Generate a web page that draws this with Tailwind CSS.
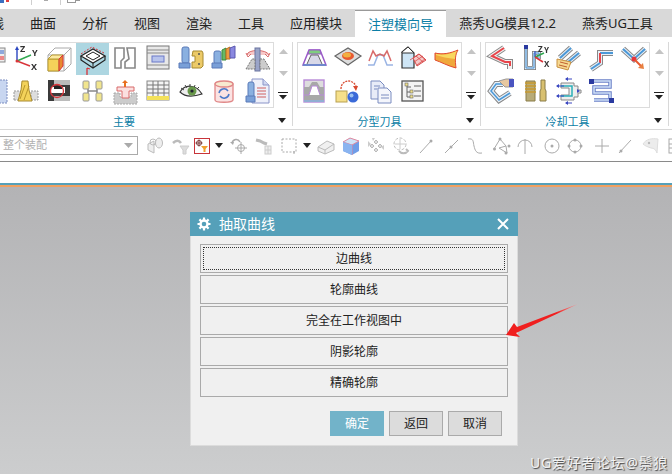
<!DOCTYPE html>
<html lang="zh-CN">
<head>
<meta charset="UTF-8">
<title>抽取曲线</title>
<script src="https://cdn.jsdelivr.net/npm/@tailwindcss/browser@4"></script>
</head>
<body class="bg-white">
<div class="relative w-[672px] h-[474px] overflow-hidden flex flex-col font-['Noto_Sans','Noto_Sans_CJK_SC',sans-serif] text-[#222]">

  <!-- quick access strip -->
  <div class="h-[9px] bg-white flex items-start shrink-0">
    <div class="w-[4px] h-[3px] bg-[#3a6fc0]"></div>
    <div class="w-[3px] h-[2px] ml-[2px] bg-[#e04040]"></div>
    <div class="w-px h-[5px] ml-[22px] bg-[#cfcfcf]"></div>
    <div class="w-[4px] h-px ml-[12px] bg-[#aaa]"></div>
    <div class="w-px h-[5px] ml-[12px] bg-[#cfcfcf]"></div>
    <div class="w-[9px] h-[3px] ml-[6px] border-b border-x border-[#999]"></div>
    <div class="w-[4px] h-[1px] bg-[#999]"></div>
  </div>

  <!-- tabs -->
  <div class="h-[28px] bg-[#d9d9d9] flex items-stretch text-[13px] leading-[28px] whitespace-nowrap shrink-0 -ml-[35px]">
    <div class="px-[13px]">曲线</div>
    <div class="px-[13px]">曲面</div>
    <div class="px-[13px]">分析</div>
    <div class="px-[13px]">视图</div>
    <div class="px-[13px]">渲染</div>
    <div class="px-[13px]">工具</div>
    <div class="px-[13px]">应用模块</div>
    <div class="px-[13px] mt-px bg-white border-t border-[#999] text-[#0b7ea6] leading-[26px]">注塑模向导</div>
    <div class="px-[13px]">燕秀UG模具12.2</div>
    <div class="px-[13px]">燕秀UG工具</div>
  </div>

  <!-- ribbon -->
  <div class="h-[93px] bg-white border-b border-[#d8d8d8] flex items-start pt-[5px] shrink-0 -ml-[26px]">

    <!-- group: 主要 -->
    <div class="grid grid-cols-[300px_18px]">
      <div class="w-[300px] h-[66px] border border-[#dcdcdc] pl-[2px] grid grid-cols-[repeat(9,33px)] grid-rows-[32px_32px] overflow-hidden [&>svg]:blur-[0.4px]">
        <svg class="w-[33px] h-[32px]" viewBox="0 0 33 32"><rect x="18" y="5" width="10" height="14" fill="#eee" stroke="#888"/><rect x="19" y="7" width="8" height="4" fill="#8fa8dc"/><rect x="19" y="13" width="8" height="4" fill="#e88"/></svg>
        <svg class="w-[33px] h-[32px]" viewBox="0 0 33 32"><path d="M7 18V5" stroke="#2a46c0" stroke-width="1.4"/><path d="M5 7l2-4 2 4z" fill="#2a46c0"/><path d="M7 18l14-6" stroke="#2fa84f" stroke-width="1.4"/><path d="M7 18l13 5" stroke="#d8343a" stroke-width="1.4"/><circle cx="7" cy="18" r="1.5" fill="#d8343a"/><text x="10" y="9" font-size="9" font-weight="700" fill="#333">Z</text><text x="22" y="13" font-size="9" font-weight="700" fill="#333">Y</text><text x="21" y="27" font-size="9" font-weight="700" fill="#333">X</text></svg>
        <svg class="w-[33px] h-[32px]" viewBox="0 0 33 32"><path d="M5 12l7-7h16v16l-7 7H5z" fill="#fff" stroke="#aaa"/><path d="M5 12h16v16M21 12l7-7" fill="none" stroke="#aaa"/><path d="M5 16h11v12H5z" fill="#f5d25a" stroke="#b79a30"/><path d="M5 16l4-4h11l-4 4z" fill="#fbe9a0" stroke="#b79a30"/><path d="M16 16l4-4v11l-4 5z" fill="#e88a30" stroke="#d8343a"/></svg>
        <svg class="w-[33px] h-[32px] bg-[#add6e1]" viewBox="0 0 33 32"><path d="M5 13L17 6l12 7-12 7z" fill="#fff" stroke="#222" stroke-width="1.2"/><path d="M10 13l7-4 7 4-7 4z" fill="#fff" stroke="#222"/><path d="M5 13v4l12 8 12-8v-4" fill="none" stroke="#222" stroke-width="1.2"/><path d="M17 20v5" stroke="#222"/><path d="M5 11L16 4l12 6" fill="none" stroke="#d8343a" stroke-dasharray="2 1.5"/><path d="M11 25v7M11 25l3 1" stroke="#d8343a" stroke-width="1.3" fill="none"/></svg>
        <svg class="w-[33px] h-[32px]" viewBox="0 0 33 32"><path d="M6 5h9v10l-3 3v7H6z" fill="#fff" stroke="#888" stroke-width="1.6"/><path d="M18 5h8v20h-10v-6l4-3z" fill="#fff" stroke="#888" stroke-width="1.6"/></svg>
        <svg class="w-[33px] h-[32px]" viewBox="0 0 33 32"><rect x="5" y="3" width="22" height="23" fill="#e8e8e8" stroke="#777"/><path d="M5 7h22M5 10h22M5 22h22" stroke="#888"/><rect x="10" y="13" width="12" height="6" fill="#b8c4ec" stroke="#6a78c8"/></svg>
        <svg class="w-[33px] h-[32px]" viewBox="0 0 33 32"><rect x="7" y="4" width="7" height="16" rx="2" fill="#8ab0e0" stroke="#5a7ab8"/><path d="M4 20h11v5H4z" fill="#7aa0d8" stroke="#5a7ab8"/><path d="M18 8h9l1 2v13l-2 2h-9v-6h3v-6h-3z" fill="#ecca68" stroke="#a88a30"/><circle cx="24" cy="11" r="1" fill="#555"/><circle cx="24" cy="21" r="1" fill="#555"/></svg>
        <svg class="w-[33px] h-[32px]" viewBox="0 0 33 32"><rect x="6" y="8" width="7" height="13" rx="2" fill="#8ab0e0" stroke="#5a7ab8"/><path d="M4 20h10v5H4z" fill="#7aa0d8" stroke="#5a7ab8"/><path d="M14 7l4-2v12h-4z" fill="#66b866" stroke="#3a8a3a"/><path d="M18 6l4-2v12h-4z" fill="#ee9a40" stroke="#b87020"/><path d="M22 5l5-2v12h-5z" fill="#8a88e0" stroke="#5a58b0"/></svg>
        <svg class="w-[33px] h-[32px]" viewBox="0 0 33 32"><path d="M6 12c0-6 20-6 22 0" fill="#f7c8c8" stroke="#d86a6a"/><path d="M5 10l2 4 3-3M29 10l-2 4-3-3" fill="none" stroke="#d86a6a"/><rect x="14" y="5" width="5" height="23" fill="#9aa4c8" stroke="#6a74a0"/><path d="M5 26l6-10h3v10zM19 16h4l6 10H19z" fill="#ccc" stroke="#777" stroke-dasharray="2 1"/></svg>

        <svg class="w-[33px] h-[32px]" viewBox="0 0 33 32"><rect x="20" y="5" width="10" height="23" fill="#c8d6f0" stroke="#7a8cc0" stroke-dasharray="2 1"/></svg>
        <svg class="w-[33px] h-[32px]" viewBox="0 0 33 32"><path d="M4 25v-9h7v9zM21 25v-9h7v9z" fill="#ddd" stroke="#999" stroke-dasharray="2 1"/><path d="M8 26l3-11 1-9h6l1 9 3 11z" fill="#f3d25a" stroke="#a88a30"/><path d="M10 24l5-14M14 25l5-14" stroke="#b8962c"/></svg>
        <svg class="w-[33px] h-[32px]" viewBox="0 0 33 32"><rect x="5" y="5" width="22" height="21" fill="#3a3a3a"/><path d="M11 5h16v5H11zM11 21h16v5H11z" fill="#bbb"/><path d="M8 12h14v6H8z" fill="#fff"/><path d="M11 11h8v3h-8z" fill="#222"/><circle cx="14" cy="16" r="6.5" fill="none" stroke="#d8343a" stroke-width="1.3"/></svg>
        <svg class="w-[33px] h-[32px]" viewBox="0 0 33 32"><path d="M12 10v12M21 10v12M12 16h9" stroke="#888" stroke-width="1.5"/><rect x="7" y="6" width="6" height="8" rx="1" fill="#f1e58e" stroke="#999"/><rect x="20" y="6" width="6" height="8" rx="1" fill="#f1e58e" stroke="#999"/><rect x="7" y="18" width="6" height="8" rx="1" fill="#f1e58e" stroke="#999"/><rect x="20" y="18" width="6" height="8" rx="1" fill="#f1e58e" stroke="#999"/></svg>
        <svg class="w-[33px] h-[32px]" viewBox="0 0 33 32"><path d="M5 18h6v4h11v-4h6v11H5z" fill="#ccc" stroke="#aaa" stroke-dasharray="2 1"/><path d="M8 12h17v4h-5v7h-7v-7H8z" fill="#fbe0e0" stroke="#d86a6a"/><path d="M16 12V7" stroke="#e87020" stroke-width="2"/><path d="M13 8l3-3 3 3z" fill="#e87020"/></svg>
        <svg class="w-[33px] h-[32px]" viewBox="0 0 33 32"><rect x="5" y="6" width="22" height="19" fill="#f4f4f4" stroke="#888"/><path d="M5 10h22M5 14h22M5 18h22M11 6v19M16 6v19M22 6v19" stroke="#777"/><rect x="5" y="21" width="22" height="4" fill="#f3e15a"/></svg>
        <svg class="w-[33px] h-[32px]" viewBox="0 0 33 32"><path d="M5 17c5-8 16-8 22 2-6 2-16 4-22-2z" fill="#eee" stroke="#333" stroke-width="1.2"/><path d="M6 13l3 2M10 10l2 3M15 9v3M20 10l-1 3M24 12l-2 2" stroke="#444"/><circle cx="17" cy="16" r="4.5" fill="#68984a"/><circle cx="17" cy="16" r="1.6" fill="#223"/></svg>
        <svg class="w-[33px] h-[32px]" viewBox="0 0 33 32"><path d="M7 9v16c0 3 18 3 18 0V9z" fill="#fbe3e3" stroke="#e08888" stroke-width="1.3"/><ellipse cx="16" cy="9" rx="9" ry="3" fill="#f7ead0" stroke="#e08888" stroke-width="1.3"/><path d="M11 18a5 5 0 0 1 9-2M21 19a5 5 0 0 1-9 2" fill="none" stroke="#4a78c8" stroke-width="1.5"/></svg>
        <svg class="w-[33px] h-[32px]" viewBox="0 0 33 32"><path d="M11 4h11l6 6v18H11z" fill="#eef0fa" stroke="#8a94c8"/><path d="M22 4v6h6" fill="#cfd6f0" stroke="#8a94c8"/><path d="M16 13h9M16 16h9M16 19h9M16 22h9" stroke="#d06060"/><rect x="7" y="7" width="6" height="15" rx="2" fill="#8ab0e0" stroke="#5a7ab8"/><path d="M5 21h9v6H5z" fill="#7aa0d8" stroke="#5a7ab8"/></svg>
      </div>
      <div class="flex flex-col items-center pt-[6px] w-[18px]">
        <svg class="w-[9px] h-[5px] mt-px" viewBox="0 0 9 5"><path d="M0 5l4.500-5 4.500 5z" fill="#c4c4c4"/></svg>
        <svg class="w-[9px] h-[5px] mt-[17px]" viewBox="0 0 9 5"><path d="M0 0l4.500 5 4.500-5z" fill="#c4c4c4"/></svg>
        <svg class="w-[10px] h-[8px] mt-[16px]" viewBox="0 0 10 8"><path d="M0 .5h10" stroke="#222"/><path d="M1 3h8L5 7.500z" fill="#222"/></svg>
      </div>
      <div class="text-center text-[11px] leading-[28px] text-[#0b7ea6]">主要</div>
      <div class="flex justify-center pt-[10px] pr-[3px]"><svg class="w-[8px] h-[5px]" viewBox="0 0 8 5"><path d="M0 0h8L4 5z" fill="#222"/></svg></div>
    </div>
    <div class="w-px h-[84px] bg-[#d8d8d8] mr-[4px]"></div>

    <!-- group: 分型刀具 -->
    <div class="grid grid-cols-[165px_18px]">
      <div class="w-[165px] h-[66px] border border-[#dcdcdc] grid grid-cols-[repeat(5,33px)] grid-rows-[32px_32px] overflow-hidden [&>svg]:blur-[0.4px]">
        <svg class="w-[33px] h-[32px]" viewBox="0 0 33 32"><path d="M11 7h11l6 15H5z" fill="#fff" stroke="#9a5ac8" stroke-width="1.5"/><path d="M11 7h11l1 4H10z" fill="#7fce7f" stroke="#9a5ac8"/><path d="M9 21l4-9h7l4 9" fill="#d8d8e8" stroke="#666"/><path d="M5 22h23" stroke="#5a8ac8" stroke-width="1.5"/></svg>
        <svg class="w-[33px] h-[32px]" viewBox="0 0 33 32"><path d="M4 13L17 5l13 8-13 9z" fill="#ddd" stroke="#666" stroke-width="1.2"/><ellipse cx="17" cy="13" rx="6" ry="4" fill="#e85a30"/><ellipse cx="16" cy="12" rx="4" ry="2.500" fill="#f2b040"/></svg>
        <svg class="w-[33px] h-[32px]" viewBox="0 0 33 32"><path d="M4 22h6l4-10h5l4 10h6" fill="none" stroke="#9ab4e4" stroke-width="1.5"/><path d="M5 18l4-10 3 5 4-2 4 2 3-5 4 10" fill="none" stroke="#d86a6a" stroke-width="1.5"/></svg>
        <svg class="w-[33px] h-[32px]" viewBox="0 0 33 32"><path d="M5 9l6-5 6 6v15H5z" fill="#cfe6f6" stroke="#333" stroke-width="1.2"/><path d="M5 9l6-5 6 6H5z" fill="#fff" stroke="#333"/><path d="M16 15l6-4 7 6-9 6z" fill="#f4c8c8" stroke="#d84a4a"/><path d="M19 13l7 6M22 11l7 6M13 17l9-6M17 19l9-6M20 22l8-6" stroke="#d84a4a" stroke-width=".8"/></svg>
        <svg class="w-[33px] h-[32px]" viewBox="0 0 33 32"><path d="M5 10c8 2 16 0 23-3-3 5-3 10-2 18-8-2-15-6-21-8z" fill="#f0a83c" stroke="#e04a30"/><path d="M6 11c7 2 14 0 21-3-2 3-2 5-2 8-7-1-14-2-19-4z" fill="#f8d860"/></svg>
        <svg class="w-[33px] h-[32px]" viewBox="0 0 33 32"><rect x="6" y="5" width="20" height="22" fill="#ddd" stroke="#b88ad8" stroke-width="1.4"/><path d="M6 12h5l3-5h5l3 5h4v15H6z" fill="#a8a8a8"/><path d="M6 20h5l3-9h5l3 9h4" fill="#fff" stroke="#b88ad8"/><path d="M6 26h20" stroke="#8ab0e0" stroke-width="1.5"/></svg>
        <svg class="w-[33px] h-[32px]" viewBox="0 0 33 32"><rect x="5" y="16" width="11" height="11" fill="#f6e08a" stroke="#b8a050"/><path d="M10 14c0-9 11-11 15-3" fill="none" stroke="#d84a30" stroke-width="1.3" stroke-dasharray="2 1"/><path d="M22 11l5 0-2 5z" fill="#d84a30"/><circle cx="22" cy="22" r="5.500" fill="#3a6ad8"/><circle cx="20.500" cy="20.500" r="2" fill="#9ac0f0"/></svg>
        <svg class="w-[33px] h-[32px]" viewBox="0 0 33 32"><path d="M7 6h9l4 4v14H7z" fill="#e8ecf8" stroke="#7a8cc0"/><path d="M14 13h9l4 4v11H14z" fill="#f4f6fc" stroke="#7a8cc0"/><path d="M17 20h8M17 23h8M10 11h6M10 14h3" stroke="#7a8cc0"/></svg>
        <svg class="w-[33px] h-[32px]" viewBox="0 0 33 32"><rect x="5" y="6" width="21" height="20" fill="#f4f4f4" stroke="#555" stroke-width="1.3"/><path d="M10 9v13M10 12h4M10 17h4M10 22h4M17 11h7M17 16h7M17 21h7" stroke="#666"/><rect x="8" y="8" width="3" height="3" fill="#f0e08a" stroke="#666" stroke-width=".6"/><rect x="13" y="15" width="3" height="3" fill="#f0e08a" stroke="#666" stroke-width=".6"/><rect x="13" y="20" width="3" height="3" fill="#f0e08a" stroke="#666" stroke-width=".6"/></svg>
        <span></span>
      </div>
      <div class="flex flex-col items-center pt-[6px] w-[18px]">
        <svg class="w-[9px] h-[5px] mt-px" viewBox="0 0 9 5"><path d="M0 5l4.500-5 4.500 5z" fill="#c4c4c4"/></svg>
        <svg class="w-[9px] h-[5px] mt-[17px]" viewBox="0 0 9 5"><path d="M0 0l4.500 5 4.500-5z" fill="#c4c4c4"/></svg>
        <svg class="w-[10px] h-[8px] mt-[16px]" viewBox="0 0 10 8"><path d="M0 .5h10" stroke="#222"/><path d="M1 3h8L5 7.500z" fill="#222"/></svg>
      </div>
      <div class="text-center text-[11px] leading-[28px] text-[#0b7ea6]">分型刀具</div>
      <div class="flex justify-center pt-[10px] pr-[3px]"><svg class="w-[8px] h-[5px]" viewBox="0 0 8 5"><path d="M0 0h8L4 5z" fill="#222"/></svg></div>
    </div>
    <div class="w-px h-[84px] bg-[#d8d8d8] mr-[4px]"></div>

    <!-- group: 冷却工具 -->
    <div class="grid grid-cols-[165px_18px]">
      <div class="w-[165px] h-[66px] border border-[#dcdcdc] grid grid-cols-[repeat(5,33px)] grid-rows-[32px_32px] overflow-hidden [&>svg]:blur-[0.4px]">
        <svg class="w-[33px] h-[32px]" viewBox="0 0 33 32"><g fill="none"><path d="M18 5L6 13l13 6h5v7" stroke="#888" stroke-width="6"/><path d="M18 5L6 13l13 6h5v7" stroke="#f2f2f2" stroke-width="4"/><path d="M18 5L6 13l13 6h5v4" stroke="#e8444a" stroke-width="2"/></g></svg>
        <svg class="w-[33px] h-[32px]" viewBox="0 0 33 32"><g fill="none"><path d="M7 5v20h8V10h5v6" stroke="#777" stroke-width="4"/><path d="M7 5v20h8V10h5v6" stroke="#d8e8f6" stroke-width="2.500"/><path d="M7 5v20h8V10h5v6" stroke="#4a90d0"/></g><rect x="5" y="2" width="4" height="4" fill="#2a3aa0"/><path d="M16 14V8" stroke="#2a46c0"/><path d="M16 14l9-4" stroke="#2fa84f" stroke-width="1.5"/><path d="M16 14l8 5" stroke="#d8343a" stroke-width="1.5"/><text x="19" y="9" font-size="8" font-weight="700" fill="#333">Z</text><text x="25" y="10" font-size="8" font-weight="700" fill="#333">Y</text><text x="25" y="24" font-size="8" font-weight="700" fill="#333">X</text></svg>
        <svg class="w-[33px] h-[32px]" viewBox="0 0 33 32"><g fill="none"><path d="M8 15L19 5M15 20l12-10" stroke="#888" stroke-width="6"/><path d="M8 15L19 5M15 20l12-10" stroke="#e8f0f8" stroke-width="4"/><path d="M8 15L19 5M15 20l12-10" stroke="#4a98d8" stroke-width="2"/></g><path d="M5 16l14 3-3 8-11-3z" fill="#f6d890" stroke="#c89040"/><path d="M8 19l8 2M7 22l8 2" stroke="#c06030"/></svg>
        <svg class="w-[33px] h-[32px]" viewBox="0 0 33 32"><g fill="none"><path d="M28 10H15v10L6 26" stroke="#888" stroke-width="6"/><path d="M28 10H15v10L6 26" stroke="#e8f0f8" stroke-width="4"/><path d="M28 10H15" stroke="#4a98d8" stroke-width="2"/><path d="M15 10v10" stroke="#e8444a" stroke-width="2"/><path d="M15 20L6 26" stroke="#4a98d8" stroke-width="2"/></g></svg>
        <svg class="w-[33px] h-[32px]" viewBox="0 0 33 32"><g fill="none"><path d="M5 6l11 10L27 6" stroke="#888" stroke-width="6"/><path d="M5 6l11 10L27 6" stroke="#e8f0f8" stroke-width="4"/><path d="M5 6l11 10L27 6" stroke="#4a98d8" stroke-width="2"/></g><circle cx="16" cy="16" r="2.500" fill="#e8343a"/><path d="M17 17l7 7" stroke="#e85a30" stroke-width="2"/><path d="M26 26l-1-6-5 5z" fill="#e88040"/></svg>
        <svg class="w-[33px] h-[32px]" viewBox="0 0 33 32"><g fill="none"><path d="M17 9H10L5 16l8 9 11-7" stroke="#888" stroke-width="6"/><path d="M17 9H10L5 16l8 9 11-7" stroke="#e8f0f8" stroke-width="4"/><path d="M17 9H10L5 16l8 9 11-7" stroke="#4a98d8" stroke-width="1.500"/></g><path d="M13 6l7-2h7v8h-8z" fill="#e8c8a0" stroke="#999"/><rect x="23" y="4" width="5" height="8" fill="#4a54c0"/></svg>
        <svg class="w-[33px] h-[32px]" viewBox="0 0 33 32"><path d="M7 6h9v20H7z" fill="#b8ab78" stroke="#8a7c48"/><path d="M6 8h11M6 11h11M6 14h11M6 17h11" stroke="#c89a30" stroke-width="1.5"/><path d="M22 5h4v9l1 2v10h-6V16l1-2z" fill="#d8c070" stroke="#8a7c48"/></svg>
        <svg class="w-[33px] h-[32px]" viewBox="0 0 33 32"><path d="M9 8h13v3h4v4h3v3h-3v4h-4v3H9v-5h8v-7H9z" fill="#eee" stroke="#888"/><path d="M9 11h11v10H9" fill="none" stroke="#2cb0b8" stroke-width="1.500"/><path d="M5 11h7M5 21h7M14 4h6M14 28h6" stroke="#3a46c0"/><path d="M4 11l3-2v4zM4 21l3-2v4zM13 4l3-2v4zM13 28l3-2v4zM28 16l-3-2v4z" fill="#3a46c0"/></svg>
        <svg class="w-[33px] h-[32px]" viewBox="0 0 33 32"><g fill="none"><path d="M6 6h19v6H9v6h16v7h-16" stroke="#6a80c8" stroke-width="3.500"/><path d="M6 6h19v6H9v6h16v7h-16" stroke="#cfe0f6" stroke-width="1.500"/></g><rect x="4" y="4" width="5" height="5" fill="#2a3aa0"/><rect x="24" y="23" width="5" height="5" fill="#2a3aa0"/></svg>
        <span></span>
      </div>
      <div class="flex flex-col items-center pt-[6px] w-[18px]">
        <svg class="w-[9px] h-[5px] mt-px" viewBox="0 0 9 5"><path d="M0 5l4.500-5 4.500 5z" fill="#c4c4c4"/></svg>
        <svg class="w-[9px] h-[5px] mt-[17px]" viewBox="0 0 9 5"><path d="M0 0l4.500 5 4.500-5z" fill="#c4c4c4"/></svg>
        <svg class="w-[10px] h-[8px] mt-[16px]" viewBox="0 0 10 8"><path d="M0 .5h10" stroke="#222"/><path d="M1 3h8L5 7.500z" fill="#222"/></svg>
      </div>
      <div class="text-center text-[11px] leading-[28px] text-[#0b7ea6]">冷却工具</div>
      <div class="flex justify-center pt-[10px] pr-[3px]"><svg class="w-[8px] h-[5px]" viewBox="0 0 8 5"><path d="M0 0h8L4 5z" fill="#222"/></svg></div>
    </div>
    <div class="w-px h-[84px] bg-[#d8d8d8]"></div>
  </div>

  <!-- selection bar -->
  <div class="h-[32px] bg-white border-b border-[#8a8a8a] flex items-center shrink-0 [&>svg]:blur-[0.3px]">
    <div class="w-[139px] h-[19px] -ml-px pl-[3px] pr-[4px] border border-[#aaa] flex items-center justify-between shrink-0 text-[11px] text-[#b0b0b0]">
      <span>整个装配</span>
      <svg class="w-[9px] h-[5px]" viewBox="0 0 9 5"><path d="M0 0h9L4.500 5z" fill="#aaa"/></svg>
    </div>
    <svg class="w-[20px] h-[20px] ml-[7px] shrink-0" viewBox="0 0 20 20"><path d="M3 8l6-3v12l-6-3zM9 8h5" fill="#eee" stroke="#bbb"/><circle cx="8" cy="6" r="3" fill="none" stroke="#bbb"/><ellipse cx="14" cy="7" rx="3.500" ry="5" fill="#eee" stroke="#bbb"/></svg>
    <svg class="w-[20px] h-[20px] ml-[6px] shrink-0" viewBox="0 0 20 20"><path d="M2 7c3-3 6-3 8 0" fill="none" stroke="#bbb" stroke-width="2.500"/><path d="M9 10h9l-3 4v4h-3v-4z" fill="#ddd" stroke="#ccc"/></svg>
    <svg class="w-[20px] h-[20px] ml-[1px] shrink-0" viewBox="0 0 20 20"><rect x="2.500" y="2.500" width="15" height="15" fill="#fff" stroke="#c8343a"/><circle cx="7" cy="7" r="2.500" fill="none" stroke="#7a3a3a"/><path d="M7 3.500v7M3.500 7h7" stroke="#7a3a3a"/><path d="M9 10h7l-2.500 3v3h-2v-3z" fill="#f0a030"/></svg>
    <svg class="w-[8px] h-[5px] ml-[3px] shrink-0" viewBox="0 0 8 5"><path d="M0 0h8L4 5z" fill="#222"/></svg>
    <svg class="w-[20px] h-[20px] ml-[6px] shrink-0" viewBox="0 0 20 20"><circle cx="12" cy="12" r="3.500" fill="none" stroke="#aaa"/><path d="M12 6v12M6 12h12" stroke="#aaa"/><path d="M3 7c1-4 6-5 8-1" fill="none" stroke="#aaa" stroke-width="1.500"/><path d="M1 6l4 0-1 3z" fill="#aaa"/></svg>
    <svg class="w-[20px] h-[20px] ml-[4px] shrink-0" viewBox="0 0 20 20"><path d="M3 4l4 1 4 2 3 1" stroke="#bbb" stroke-width="3" fill="none"/><rect x="12" y="10" width="6" height="8" fill="#eee" stroke="#ccc"/><path d="M12 14h6M15 10v8" stroke="#ccc"/></svg>
    <svg class="w-[20px] h-[20px] ml-[6px] shrink-0" viewBox="0 0 20 20"><rect x="3" y="3" width="14" height="13" fill="none" stroke="#aaa" stroke-dasharray="2 1.500"/><path d="M15 15v3" stroke="#aaa"/></svg>
    <svg class="w-[8px] h-[5px] ml-[4px] shrink-0" viewBox="0 0 8 5"><path d="M0 0h8L4 5z" fill="#222"/></svg>
    <svg class="w-[20px] h-[20px] ml-[5px] shrink-0" viewBox="0 0 20 20"><path d="M2 11l9-6 7 3v6l-9 4-7-3z" fill="#f0f0f0" stroke="#bbb"/><path d="M2 11l7 3 9-6M9 14v4" fill="none" stroke="#bbb"/></svg>
    <svg class="w-[20px] h-[20px] ml-[5px] shrink-0" viewBox="0 0 20 20"><path d="M2 6l7-4 9 3v10l-7 4-9-4z" fill="#6f9de8"/><path d="M2 6l9 3 7-4-9-3z" fill="#cfe4f8" stroke="#e08aa0"/><path d="M11 9v10" stroke="#e08aa0"/><path d="M2 6v9l9 4V9z" fill="#8ab4f0"/></svg>
    <svg class="w-[20px] h-[20px] ml-[5px] shrink-0" viewBox="0 0 20 20"><path d="M10 4l2 2-2 2-2-2zM10 12l2 2-2 2-2-2zM6 8l2 2-2 2-2-2zM14 8l2 2-2 2-2-2z" fill="#ddd" stroke="#bbb"/><path d="M2 5l3 3-3 3zM18 9l-3 2 3 3zM6 2h3l-2 3z" fill="#ccc"/></svg>
    <svg class="w-[20px] h-[20px] ml-[5px] shrink-0" viewBox="0 0 20 20"><circle cx="9" cy="8" r="6" fill="none" stroke="#bbb" stroke-dasharray="3 1.500"/><path d="M9 3v10M4 8h10" stroke="#ccc"/><path d="M8 15c2 3 7 3 9 0l-2-2" fill="none" stroke="#bbb" stroke-width="2"/></svg>
    <svg class="w-[20px] h-[20px] ml-[5px] shrink-0" viewBox="0 0 20 20"><path d="M4 17L15 5" stroke="#aaa"/><circle cx="15" cy="5" r="1.500" fill="#aaa"/></svg>
    <svg class="w-[20px] h-[20px] ml-[5px] shrink-0" viewBox="0 0 20 20"><path d="M4 17L17 4" stroke="#aaa"/><circle cx="10" cy="11" r="1.500" fill="#aaa"/></svg>
    <svg class="w-[20px] h-[20px] ml-[4px] shrink-0" viewBox="0 0 20 20"><path d="M3 3c6-1 5 3 6 7s2 8 8 7" fill="none" stroke="#aaa"/></svg>
    <svg class="w-[20px] h-[20px] ml-[7px] shrink-0" viewBox="0 0 20 20"><path d="M2 13l6-10 6 7 1 7-8-5 7-2" fill="none" stroke="#aaa"/><circle cx="2.500" cy="13" r="1.500" fill="#aaa"/><circle cx="8" cy="3" r="1.500" fill="#aaa"/><circle cx="14" cy="17" r="1.500" fill="#aaa"/><circle cx="17" cy="10" r="1.500" fill="#aaa"/></svg>
    <svg class="w-[20px] h-[20px] ml-[3px] shrink-0" viewBox="0 0 20 20"><path d="M3 11a7 7 0 0 1 14 0M10 3v15" fill="none" stroke="#aaa"/></svg>
    <svg class="w-[20px] h-[20px] ml-[7px] shrink-0" viewBox="0 0 20 20"><circle cx="10" cy="10" r="7" fill="none" stroke="#aaa"/><circle cx="10" cy="10" r="1.500" fill="#aaa"/></svg>
    <svg class="w-[20px] h-[20px] ml-[3px] shrink-0" viewBox="0 0 20 20"><circle cx="10" cy="10" r="6" fill="none" stroke="#aaa"/><circle cx="10" cy="4" r="1.500" fill="#aaa"/><circle cx="10" cy="16" r="1.500" fill="#aaa"/><circle cx="4" cy="10" r="1.500" fill="#aaa"/><circle cx="16" cy="10" r="1.500" fill="#aaa"/></svg>
    <svg class="w-[20px] h-[20px] ml-[7px] shrink-0" viewBox="0 0 20 20"><path d="M10 3v14M3 10h14" stroke="#aaa"/></svg>
    <svg class="w-[20px] h-[20px] ml-[3px] shrink-0" viewBox="0 0 20 20"><path d="M4 17L16 4" stroke="#aaa"/><circle cx="6" cy="15" r="1.500" fill="#aaa"/></svg>
    <svg class="w-[20px] h-[20px] ml-[6px] shrink-0" viewBox="0 0 20 20"><path d="M2 8c3-5 9-6 15-5l-1 14c-1-3-3-5-6-5-3-1-6-2-8-4z" fill="#ececec" stroke="#ddd"/><circle cx="8" cy="7" r="1.200" fill="#bbb"/></svg>
    <svg class="w-[20px] h-[20px] ml-[6px] shrink-0" viewBox="0 0 20 20"><rect x="2" y="3" width="14" height="14" fill="#fff" stroke="#aaa"/><path d="M2 8h14M2 12h14" stroke="#aaa"/></svg>
  </div>

  <!-- blank band and accent lines -->
  <div class="h-[21px] bg-white shrink-0"></div>
  <div class="h-[2px] bg-[#55a0b9] shrink-0"></div>
  <div class="h-[2px] bg-[#f0a060] shrink-0"></div>

  <!-- graphics window -->
  <div class="flex-1 bg-gradient-to-b from-[#b3b3b5] to-[#cccdce]"></div>

  <!-- dialog -->
  <div class="absolute left-[190px] top-[212px] w-[328px] h-[234px] bg-[#f0f0f0] border-x border-b border-[#dcdcdc] flex flex-col">
    <div class="h-[24px] -mx-px bg-[#55a0b9] flex items-center pl-[7px] pr-[9px] text-white text-[14px] shrink-0">
      <svg class="w-[14px] h-[14px] shrink-0" viewBox="0 0 14 14"><path d="M7 3.500a3.500 3.500 0 1 0 0 7 3.500 3.500 0 0 0 0-7z" fill="none" stroke="#fff" stroke-width="2.400"/><path d="M7 .5v3M7 10.500v3M.5 7h3M10.500 7h3M2.400 2.400l2.100 2.100M9.500 9.500l2.100 2.100M11.600 2.400L9.500 4.500M4.500 9.500l-2.100 2.100" stroke="#fff" stroke-width="2.200"/></svg>
      <span class="ml-[8px] leading-[24px]">抽取曲线</span>
      <svg class="w-[12px] h-[12px] ml-auto shrink-0" viewBox="0 0 12 12"><path d="M1 1l10 10M11 1L1 11" stroke="#fff" stroke-width="2"/></svg>
    </div>
    <div class="flex flex-col gap-[2px] px-[9px] pt-[8px] text-[12px]">
      <button class="h-[29px] border border-[#aaa] p-[2px] flex"><span class="flex-1 border border-dotted border-[#333] leading-[21px]">边曲线</span></button>
      <button class="h-[29px] border border-[#aaa]">轮廓曲线</button>
      <button class="h-[29px] border border-[#aaa]">完全在工作视图中</button>
      <button class="h-[29px] border border-[#aaa]">阴影轮廓</button>
      <button class="h-[29px] border border-[#aaa]">精确轮廓</button>
    </div>
    <div class="flex justify-end gap-[5px] pt-[14px] pr-[15px] text-[12px]">
      <button class="w-[54px] h-[25px] bg-[#72b3c9] text-white">确定</button>
      <button class="w-[54px] h-[25px] bg-[#dcdcdc] border border-[#aaa]">返回</button>
      <button class="w-[54px] h-[25px] bg-[#dcdcdc] border border-[#aaa]">取消</button>
    </div>
  </div>

  <!-- annotation arrow -->
  <svg class="absolute left-[500px] top-[300px] w-[84px] h-[42px]" viewBox="0 0 84 42">
    <defs><linearGradient id="arrowFade" x1="0" x2="1" y1="0" y2="0"><stop offset="0.7" stop-color="#f01f1f"/><stop offset="1" stop-color="#f59a9a"/></linearGradient></defs>
    <path d="M78 4L17 27l-3-4-8 12 14 2-4-4z" fill="url(#arrowFade)"/>
  </svg>

  <!-- watermark -->
  <div class="absolute right-[4px] bottom-[2px] text-[14px] leading-[18px] tracking-[0.7px] whitespace-nowrap text-[#f2f2f2] [text-shadow:1px_1px_1px_#444]">UG爱好者论坛@鬃狼</div>
</div>
</body>
</html>
